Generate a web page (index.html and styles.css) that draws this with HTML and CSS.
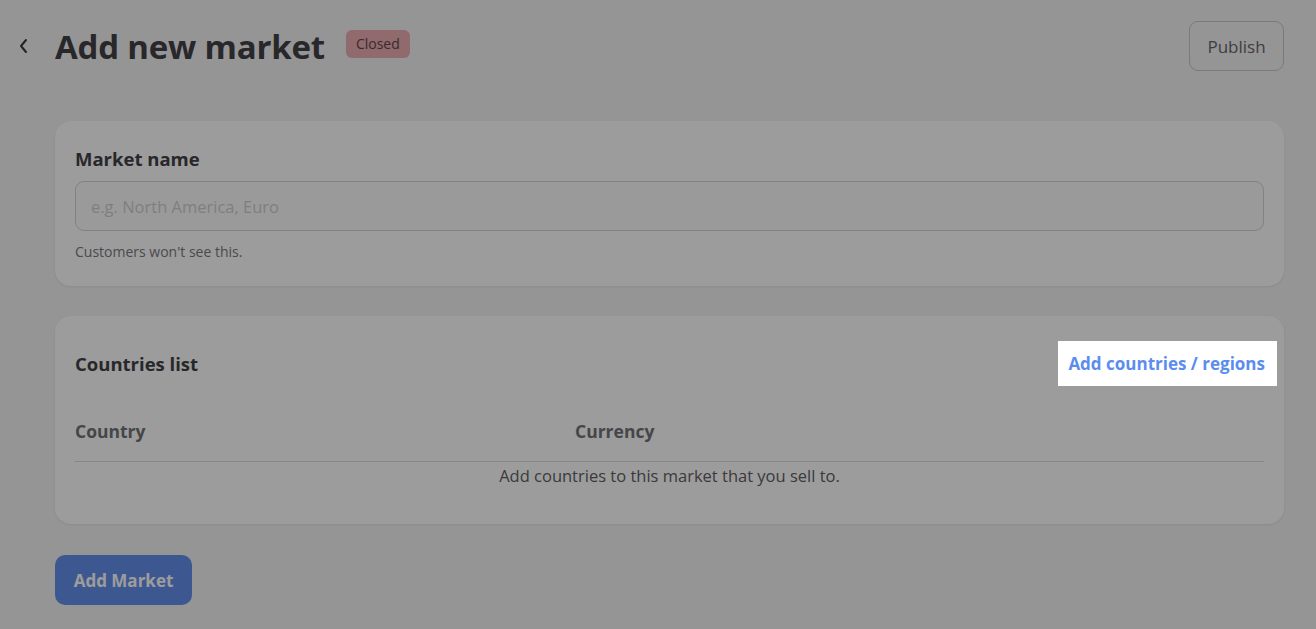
FILE: index.html
```html
<!DOCTYPE html>
<html lang="en">
<head>
  <meta charset="UTF-8" />
  <meta name="viewport" content="width=device-width, initial-scale=1.0"/>
  <title>Add new market</title>
  <link rel="stylesheet" href="styles.css">
</head>
<body>
  <div class="page">
    <div class="topbar">
      <div class="title-row">
        <button class="back-btn" aria-label="Back">
          <svg width="12" height="16" viewBox="0 0 12 16" fill="none" stroke="#3a3a3e" stroke-width="2" stroke-linecap="round" stroke-linejoin="round">
            <path d="M8 2 L3 8 L8 14"/>
          </svg>
        </button>
        <h1>Add new market</h1>
        <span class="badge">Closed</span>
      </div>
      <button class="publish-btn">Publish</button>
    </div>

    <div class="card">
      <label class="field-label" for="market-name">Market name</label>
      <input id="market-name" class="text-input" type="text" placeholder="e.g. North America, Euro">
      <p class="hint">Customers won't see this.</p>
    </div>

    <div class="card countries">
      <div class="card-head">
        <h2>Countries list</h2>
        <a href="#" class="add-link">Add countries / regions</a>
      </div>
      <div class="table-head">
        <span class="col-country">Country</span>
        <span class="col-currency">Currency</span>
      </div>
      <p class="empty">Add countries to this market that you sell to.</p>
    </div>

    <button class="primary-btn">Add Market</button>
  </div>

  <div class="overlay"></div>
</body>
</html>
```

FILE: styles.css
```css
body {
  margin: 0;
  background: #f6f3f5;
  font-family: 'Open Sans', 'Noto Sans', sans-serif;
  color: #424247;
}

.page {
  padding: 0 32px 0 55px;
}

.topbar {
  display: flex;
  justify-content: space-between;
  align-items: flex-start;
  padding-top: 21px;
  height: 121px;
  box-sizing: border-box;
}

.title-row {
  display: flex;
  align-items: center;
  margin-left: -37px;
  height: 50px;
}

.back-btn {
  background: none;
  border: none;
  padding: 0;
  width: 14px;
  height: 20px;
  margin-right: 23px;
  display: flex;
  align-items: center;
  cursor: pointer;
}

h1 {
  margin: 0;
  font-size: 33px;
  font-weight: 700;
  letter-spacing: -0.2px;
  color: #424247;
}

.badge {
  margin-left: 21px;
  margin-top: -5px;
  background: #ebadb1;
  color: #5e4649;
  font-size: 14px;
  padding: 4px 10px;
  border-radius: 6px;
  line-height: 20px;
}

.publish-btn {
  width: 95px;
  height: 50px;
  background: #f6f3f5;
  border: 1px solid #c9c7c9;
  border-radius: 9px;
  font-family: inherit;
  font-size: 17px;
  color: #66666a;
  cursor: pointer;
}

.card {
  background: #ffffff;
  border-radius: 16px;
  box-shadow: 0 1px 3px rgba(0, 0, 0, 0.08);
  padding: 26px 20px 25px;
  margin-bottom: 30px;
}

.field-label {
  display: block;
  font-size: 18.5px;
  font-weight: 700;
  line-height: 24px;
  margin-bottom: 10px;
}

.text-input {
  display: block;
  width: 100%;
  box-sizing: border-box;
  height: 50px;
  border: 1px solid #d6d4d6;
  border-radius: 9px;
  background: #fdfcfd;
  padding: 0 15px;
  font-family: inherit;
  font-size: 16.5px;
  color: #424247;
}

.text-input::placeholder {
  color: #cfcfd2;
}

.hint {
  margin: 11px 0 0;
  font-size: 14px;
  color: #7a7a7e;
}

.countries {
  padding-top: 24px;
  padding-bottom: 37px;
}

.card-head {
  display: flex;
  justify-content: space-between;
  align-items: center;
  height: 46px;
}

h2 {
  margin: 0;
  font-size: 18.5px;
  font-weight: 700;
}

.add-link {
  position: relative;
  z-index: 10;
  margin-right: -13px;
  background: #ffffff;
  padding: 11px 12px 11px 10px;
  font-size: 17px;
  font-weight: 700;
  color: #5b8def;
  text-decoration: none;
}

.table-head {
  display: flex;
  margin-top: 33px;
  padding-bottom: 18px;
  border-bottom: 1px solid #dddcdd;
  font-size: 17.5px;
  font-weight: 700;
  color: #737378;
}

.col-country {
  width: 500px;
}

.empty {
  margin: 2px 0 0;
  text-align: center;
  font-size: 16.5px;
  color: #5f5f63;
}

.primary-btn {
  width: 137px;
  height: 50px;
  margin-top: 1px;
  background: #6491ed;
  border: none;
  border-radius: 10px;
  font-family: inherit;
  font-size: 17px;
  font-weight: 700;
  color: #ffffff;
  cursor: pointer;
}

.overlay {
  position: fixed;
  inset: 0;
  background: rgba(0, 0, 0, 0.39);
  z-index: 5;
}
```
